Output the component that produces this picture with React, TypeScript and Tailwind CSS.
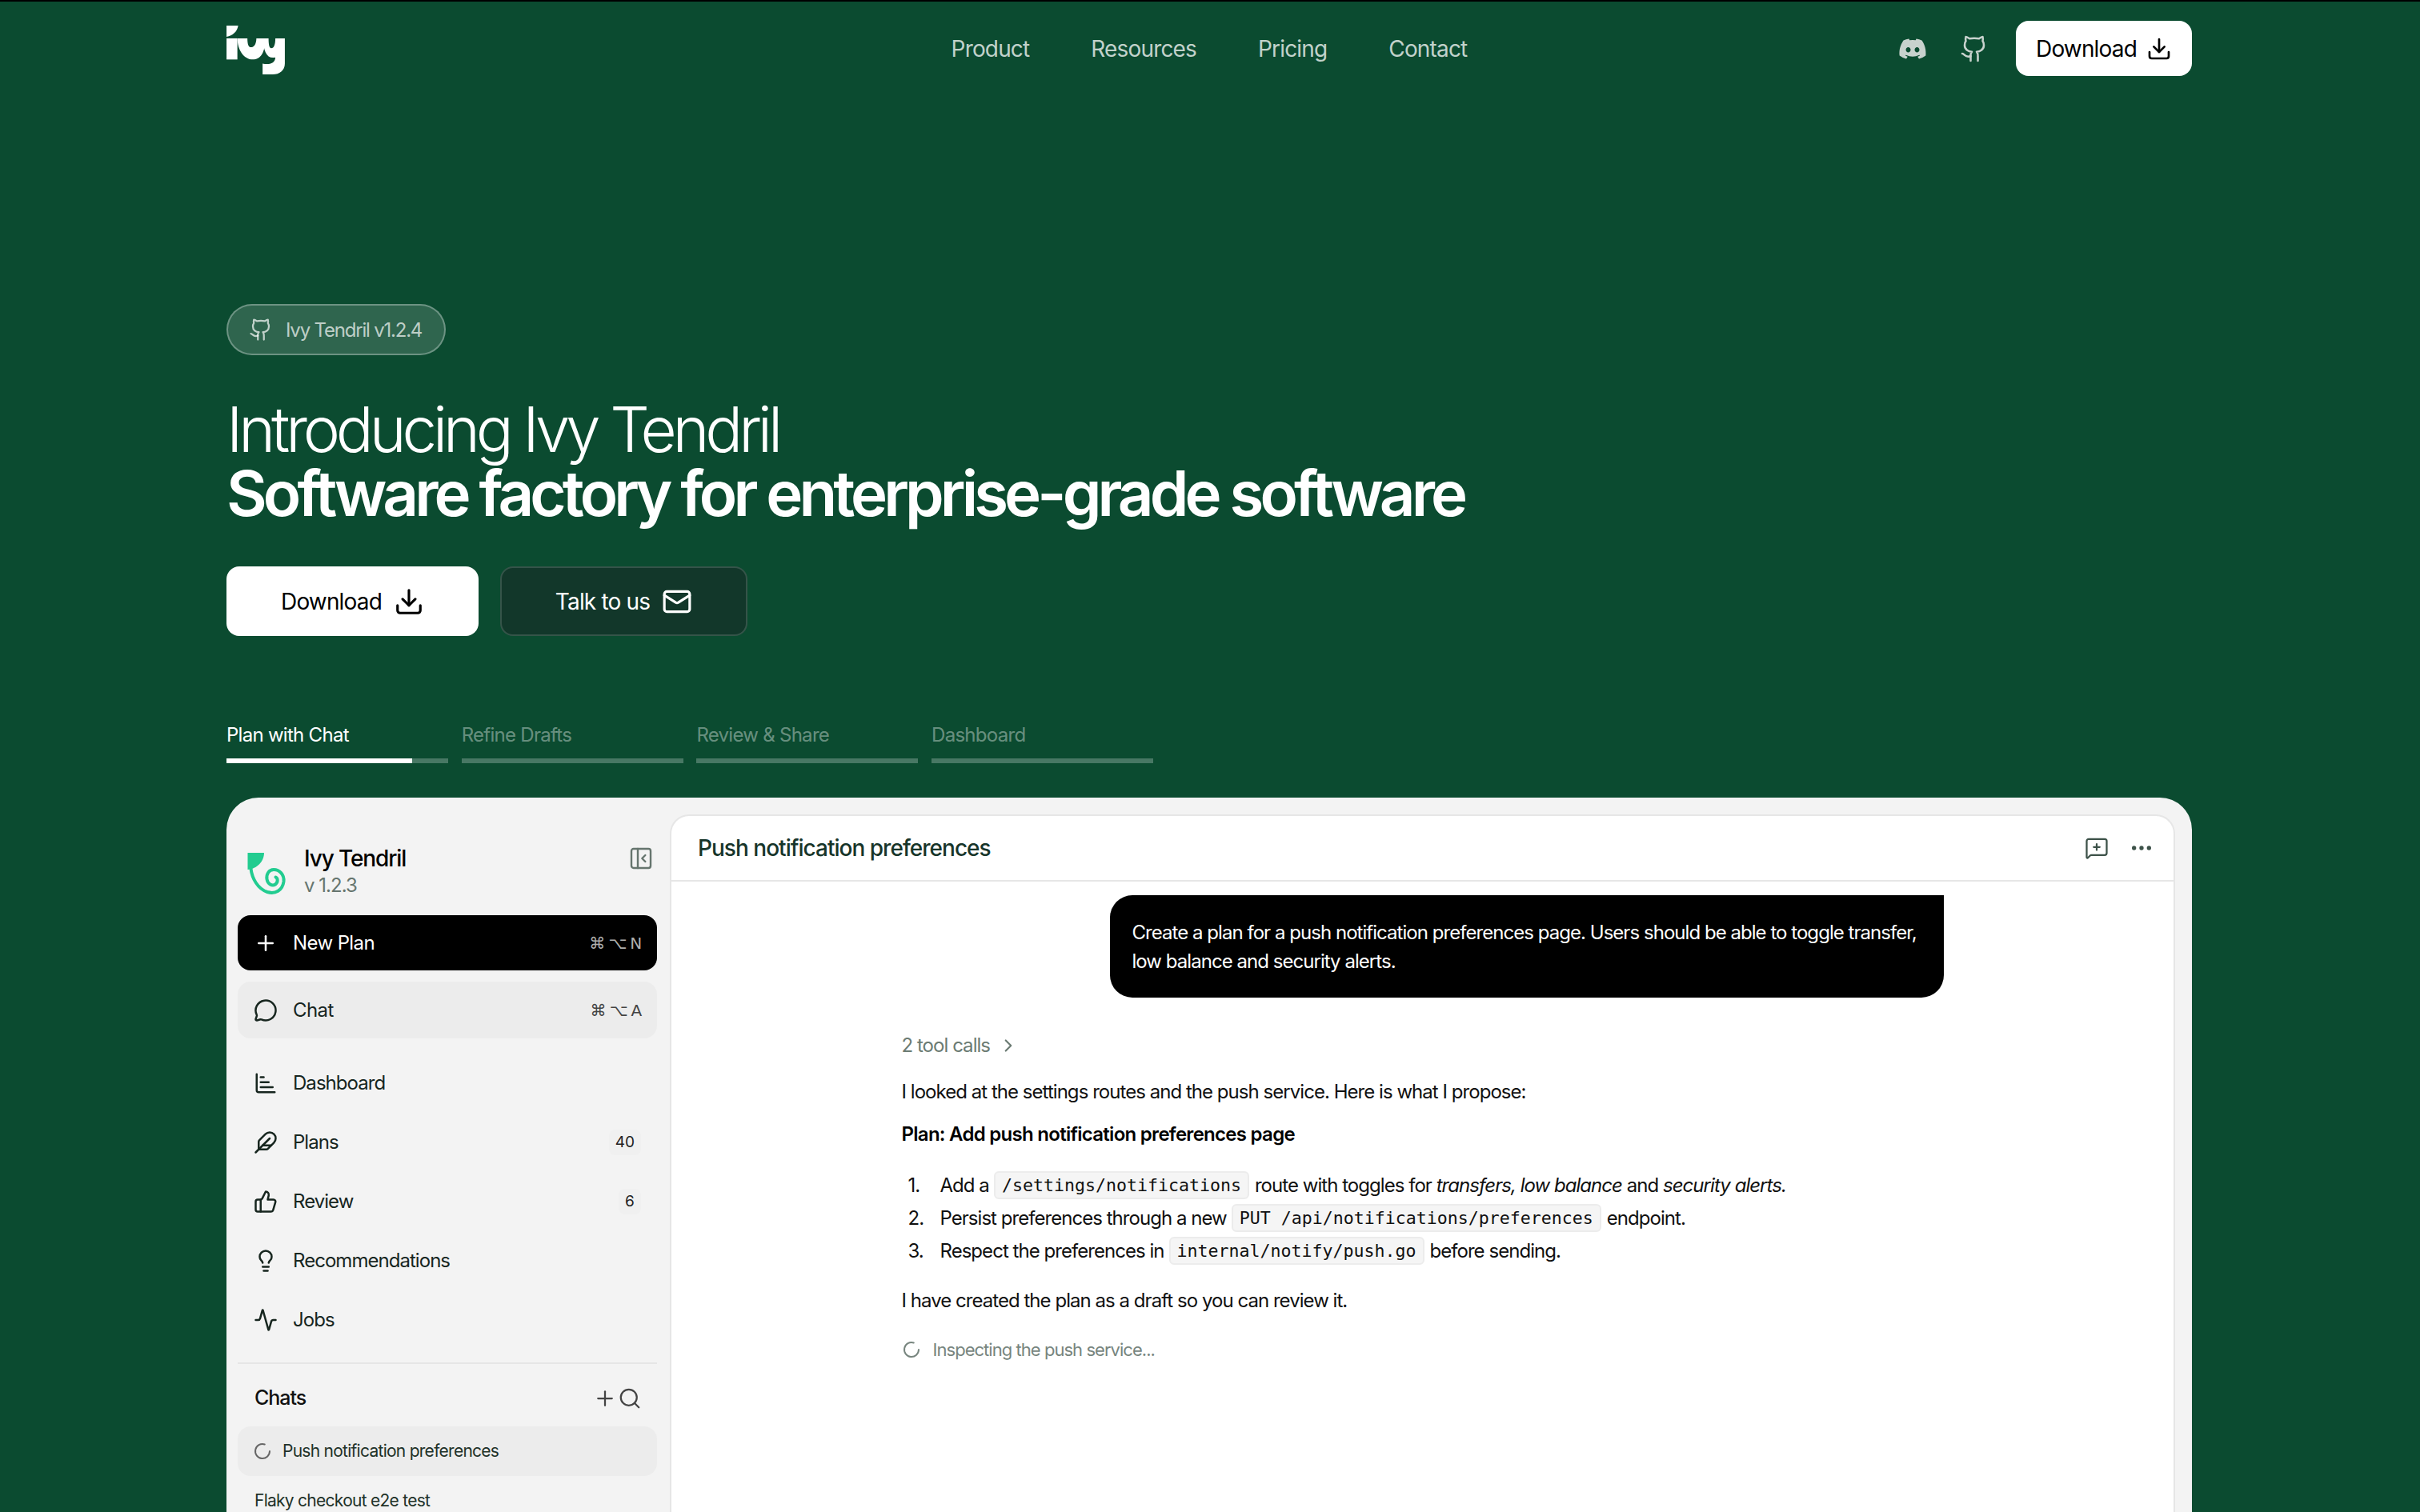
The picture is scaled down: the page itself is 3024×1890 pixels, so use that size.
import React from "react";
import {
  Download, Mail, Plus, MessageCircle, ChartBarIncreasing, Feather, ThumbsUp, Lightbulb, Activity,
  Search, LoaderCircle, ChevronRight, MessageSquarePlus, Ellipsis, PanelLeftClose, Github,
} from "lucide-react";
import { FaDiscord } from "react-icons/fa6";

function IvyLogo() {
  return (
    <svg width="73" height="61" viewBox="25 25 215 180" fill="#fff" className="block">
      <path d="M25 25H68C64 48 48 62 25 66Z" />
      <path d="M25 72H65V150H25Z" />
      <path d="M65 72C65 115 90 150 122 150C150 150 168 125 168 72H135C135 90 128 105 115 105C105 105 102 90 102 72Z" />
      <path d="M160 72C160 120 175 150 205 142C205 165 180 170 158 165V205H195C220 205 240 190 240 165V72H205C205 95 200 108 190 108C182 108 180 92 180 72Z" />
    </svg>
  );
}

function TendrilLogo() {
  return (
    <svg width="70" height="70" viewBox="0 0 70 70" className="block shrink-0">
      <path d="M8.5 11H29C29 22 20 31 8.5 32Z" fill="#22cc90" />
      <path
        d="M12.5 31C14 43 21 56 33 60C43 63 52 58 53.5 47C54.5 38 48 32 41 32C35 32 31.5 38 32.5 44C33.5 50 39 53 43 50.5C46.5 48 46.5 43 43.5 41.5"
        fill="none" stroke="#22cc90" strokeWidth="4" strokeLinecap="round"
      />
    </svg>
  );
}

function Tab({ label, active }: { label: string; active?: boolean }) {
  return (
    <div className="w-[277px]">
      <div className={`text-[24px] leading-[30px] tracking-[-0.03em] ${active ? "text-white" : "text-white/40"}`}>{label}</div>
      <div className="mt-[14px] h-[6px] bg-white/25">
        {active && <div className="h-full w-[232px] bg-white" />}
      </div>
    </div>
  );
}

function NavRow({ icon, label, badge }: { icon: React.ReactNode; label: string; badge?: string }) {
  return (
    <div className="flex h-[74px] items-center gap-[19px] pl-[20px] pr-[20px] text-[24px] tracking-[-0.04em] text-[#17261f]">
      {icon}
      <span>{label}</span>
      {badge && (
        <span className="ml-auto flex h-[32px] min-w-[28px] items-center justify-center rounded-[8px] bg-[#f0f0f0] px-[8px] text-[19px] tracking-normal text-[#222]">
          {badge}
        </span>
      )}
    </div>
  );
}

function Code({ children }: { children: React.ReactNode }) {
  return (
    <code className="ml-[6px] mr-[7px] inline-flex h-[35px] items-center rounded-[6px] border-2 border-[#ececec] bg-[#f5f5f5] px-[8px] font-['DejaVu_Sans_Mono',monospace] text-[21.6px] tracking-normal text-[#111]">
      {children}
    </code>
  );
}

export default function App() {
  return (
    <div className="h-[1890px] w-full overflow-hidden border-t-2 border-black bg-[#0b4b30] font-['Inter',sans-serif]">
      <div className="ml-[283px] w-[2456px]">
        <header className="grid grid-cols-[1fr_auto_1fr] items-center pt-[24px]">
          <div className="pt-[3px]"><IvyLogo /></div>
          <nav className="flex gap-[77px] text-[28px] tracking-[-0.03em] text-white/75">
            <span>Product</span>
            <span>Resources</span>
            <span>Pricing</span>
            <span>Contact</span>
          </nav>
          <div className="flex items-center justify-end">
            <FaDiscord className="mr-[41px] h-[36px] w-[36px] text-[#c8d2cd]" />
            <Github className="mr-[34px] h-[36px] w-[36px] text-[#c8d2cd]" strokeWidth={1.7} />
            <button className="flex h-[69px] w-[220px] items-center justify-center gap-[12px] rounded-[16px] bg-white text-[28px] tracking-[-0.03em] text-black">
              Download <Download className="h-[32px] w-[32px]" />
            </button>
          </div>
        </header>

        <div className="mt-[285px] flex h-[64px] w-[274px] items-center gap-[16px] rounded-full border-2 border-white/30 bg-white/15 pl-[26px] text-[24px] tracking-[-0.05em] text-white/70">
          <Github className="h-[30px] w-[30px]" strokeWidth={1.8} />
          <span className="pt-[1px]">Ivy Tendril v1.2.4</span>
        </div>

        <h1 className="mt-[53px] text-[78px] leading-[80px] tracking-[-0.063em] text-white">
          <span className="block font-light tracking-[-0.066em]">Introducing Ivy Tendril</span>
          <span className="block font-semibold">Software factory for enterprise-grade software</span>
        </h1>

        <div className="mt-[51px] flex gap-[27px]">
          <button className="flex h-[87px] w-[315px] items-center justify-center gap-[15px] rounded-[16px] bg-white text-[28px] tracking-[-0.03em] text-black">
            Download <Download className="h-[38px] w-[38px]" />
          </button>
          <button className="flex h-[87px] w-[309px] items-center justify-center gap-[15px] rounded-[16px] border-2 border-white/15 bg-[#12372a] text-[28px] tracking-[-0.03em] text-white">
            Talk to us <Mail className="h-[38px] w-[38px]" />
          </button>
        </div>

        <div className="mt-[109px] flex gap-[16.7px]">
          <Tab label="Plan with Chat" active />
          <Tab label="Refine Drafts" />
          <Tab label="Review & Share" />
          <Tab label="Dashboard" />
        </div>

        <section className="mt-[43px] flex h-[1000px] gap-[16px] rounded-t-[40px] bg-[#f3f3f3] pl-[14px] pr-[21px] pt-[21px]">
          <aside className="w-[524px] shrink-0">
            <div className="flex pl-[4px] pr-[4px] pt-[22px]">
              <div className="mt-[15px]"><TendrilLogo /></div>
              <div className="ml-[9px] pt-[16px]">
                <div className="text-[28px] font-medium leading-[34px] tracking-[-0.04em] text-black">Ivy Tendril</div>
                <div className="text-[24px] leading-[34px] tracking-[-0.04em] text-[#66756e]">v 1.2.3</div>
              </div>
              <PanelLeftClose className="ml-auto mt-[17px] h-[32px] w-[32px] text-[#66756e]" strokeWidth={1.8} />
            </div>
            <div className="mt-[19px] flex h-[69px] items-center gap-[19px] rounded-[16px] bg-black pl-[20px] pr-[20px] text-[24px] tracking-[-0.025em] text-white">
              <Plus className="h-[30px] w-[30px]" />
              <span>New Plan</span>
              <span className="ml-auto font-['DejaVu_Sans',sans-serif] text-[20px] tracking-[-0.06em] text-white/70">⌘ ⌥ N</span>
            </div>
            <div className="mt-[14px] flex h-[71px] items-center gap-[19px] rounded-[16px] bg-[#ececec] pl-[20px] pr-[20px] text-[24px] tracking-[-0.025em] text-[#17261f]">
              <MessageCircle className="h-[30px] w-[30px]" />
              <span>Chat</span>
              <span className="ml-auto font-['DejaVu_Sans',sans-serif] text-[20px] tracking-[-0.06em] text-[#444]">⌘ ⌥ A</span>
            </div>
            <div className="mt-[19px]">
              <NavRow icon={<ChartBarIncreasing className="h-[30px] w-[30px]" />} label="Dashboard" />
              <NavRow icon={<Feather className="h-[30px] w-[30px]" />} label="Plans" badge="40" />
              <NavRow icon={<ThumbsUp className="h-[30px] w-[30px]" />} label="Review" badge="6" />
              <NavRow icon={<Lightbulb className="h-[30px] w-[30px]" />} label="Recommendations" />
              <NavRow icon={<Activity className="h-[30px] w-[30px]" />} label="Jobs" />
            </div>
            <div className="mt-[16px] h-[2px] bg-[#e6e6e6]" />
            <div className="mt-[21px] flex h-[44px] items-center pl-[21px] pr-[19px] text-[25px] font-medium tracking-[-0.04em] text-[#111]">
              <span>Chats</span>
              <Plus className="ml-auto h-[30px] w-[30px] text-[#444]" strokeWidth={1.8} />
              <Search className="ml-[1px] h-[30px] w-[30px] text-[#444]" strokeWidth={1.8} />
            </div>
            <div className="mt-[13px] flex h-[62px] items-center gap-[13px] rounded-[16px] bg-[#ececec] pl-[19px] text-[21px] tracking-[-0.035em] text-[#1f3229]">
              <LoaderCircle className="h-[24px] w-[24px] text-[#666]" />
              <span>Push notification preferences</span>
            </div>
            <div className="flex h-[62px] items-center pl-[21px] text-[21px] tracking-[-0.035em] text-[#1f3229]">Flaky checkout e2e test</div>
          </aside>

          <main className="flex-1 rounded-t-[24px] border-x-2 border-t-2 border-[#e6e6e6] bg-white">
            <div className="flex h-[82px] items-center border-b-2 border-[#e6e6e6] pl-[33px] pr-[24px]">
              <span className="text-[28px] font-medium tracking-[-0.035em] text-[#17352a]">Push notification preferences</span>
              <MessageSquarePlus className="ml-auto h-[30px] w-[30px] text-[#3d5249]" strokeWidth={1.8} />
              <Ellipsis className="ml-[25px] h-[32px] w-[32px] text-[#3d5249]" />
            </div>
            <div className="mx-auto w-[1302px] pt-[17px] text-[24px] leading-[36px] tracking-[-0.04em] text-[#111]">
              <div className="ml-auto w-[1042px] rounded-[28px] rounded-tr-none bg-black pb-[27px] pl-[28px] pr-[28px] pt-[29px] text-white">
                Create a plan for a push notification preferences page. Users should be able to toggle transfer, low balance and security alerts.
              </div>
              <div className="mt-[42px] flex items-center gap-[10px] text-[#6b7b73]">
                2 tool calls <ChevronRight className="h-[26px] w-[26px]" />
              </div>
              <p className="mt-[22px]">I looked at the settings routes and the push service. Here is what I propose:</p>
              <p className="mt-[17px] font-semibold tracking-[-0.03em] text-black">Plan: Add push notification preferences page</p>
              <ol className="mt-[25px]">
                <li className="flex h-[41px] items-center whitespace-pre">
                  <span className="w-[48px] pl-[8px]">1.</span>Add a<Code>/settings/notifications</Code>route with toggles for <em>transfers, low balance</em> and <em>security alerts.</em>
                </li>
                <li className="flex h-[41px] items-center whitespace-pre">
                  <span className="w-[48px] pl-[8px]">2.</span>Persist preferences through a new<Code>PUT /api/notifications/preferences</Code>endpoint.
                </li>
                <li className="flex h-[41px] items-center whitespace-pre">
                  <span className="w-[48px] pl-[8px]">3.</span>Respect the preferences in<Code>internal/notify/push.go</Code>before sending.
                </li>
              </ol>
              <p className="mt-[24px]">I have created the plan as a draft so you can review it.</p>
              <div className="mt-[25px] flex items-center gap-[15px] text-[22px] text-[#77857e]">
                <LoaderCircle className="h-[24px] w-[24px]" /> Inspecting the push service...
              </div>
            </div>
          </main>
        </section>
      </div>
    </div>
  );
}
